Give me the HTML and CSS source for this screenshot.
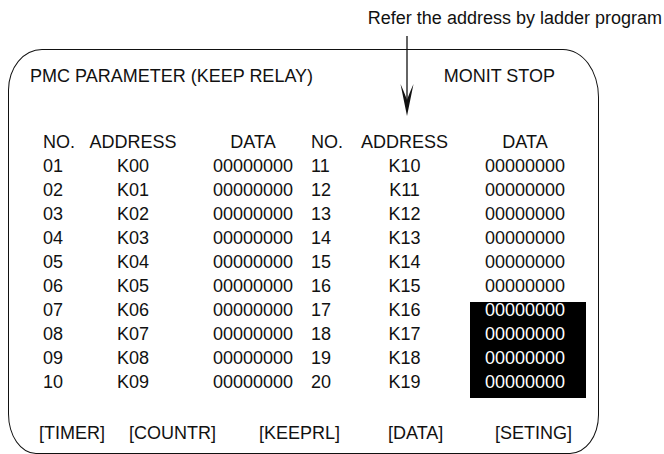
FILE: index.html
```html
<!DOCTYPE html>
<html lang="en">
<head>
  <meta charset="UTF-8" />
  <title>PMC Parameter (Keep Relay)</title>
  <link rel="stylesheet" href="styles.css">
</head>
<body>
  <div class="note">Refer the address by ladder program</div>

  <!-- pointer arrow runs over the top edge of the screen -->
  <svg class="pointer" width="20" height="82" viewBox="0 0 20 82">
    <line x1="10" y1="0" x2="10" y2="66" stroke="#111" stroke-width="1.3"/>
    <path d="M3.5 48 Q8 58 10 64 Q12 58 16.5 48 L10 80 Z" fill="#111"/>
  </svg>

  <div class="screen">
    <div class="screen-head">
      <span>PMC PARAMETER (KEEP RELAY)</span>
      <span class="status">MONIT STOP</span>
    </div>

    <div class="grid">
      <div class="no">NO.</div><div class="addr">ADDRESS</div><div class="data">DATA</div>
      <div class="no">NO.</div><div class="addr">ADDRESS</div><div class="data right">DATA</div>

      <div class="no">01</div><div class="addr">K00</div><div class="data">00000000</div>
      <div class="no">11</div><div class="addr">K10</div><div class="data right">00000000</div>

      <div class="no">02</div><div class="addr">K01</div><div class="data">00000000</div>
      <div class="no">12</div><div class="addr">K11</div><div class="data right">00000000</div>

      <div class="no">03</div><div class="addr">K02</div><div class="data">00000000</div>
      <div class="no">13</div><div class="addr">K12</div><div class="data right">00000000</div>

      <div class="no">04</div><div class="addr">K03</div><div class="data">00000000</div>
      <div class="no">14</div><div class="addr">K13</div><div class="data right">00000000</div>

      <div class="no">05</div><div class="addr">K04</div><div class="data">00000000</div>
      <div class="no">15</div><div class="addr">K14</div><div class="data right">00000000</div>

      <div class="no">06</div><div class="addr">K05</div><div class="data">00000000</div>
      <div class="no">16</div><div class="addr">K15</div><div class="data right">00000000</div>

      <div class="no">07</div><div class="addr">K06</div><div class="data">00000000</div>
      <div class="no">17</div><div class="addr">K16</div><div class="data right selected">00000000</div>

      <div class="no">08</div><div class="addr">K07</div><div class="data">00000000</div>
      <div class="no">18</div><div class="addr">K17</div><div class="data right selected">00000000</div>

      <div class="no">09</div><div class="addr">K08</div><div class="data">00000000</div>
      <div class="no">19</div><div class="addr">K18</div><div class="data right selected">00000000</div>

      <div class="no">10</div><div class="addr">K09</div><div class="data">00000000</div>
      <div class="no">20</div><div class="addr">K19</div><div class="data right selected">00000000</div>
    </div>

    <div class="softkeys">
      <span>[TIMER]</span>
      <span>[COUNTR]</span>
      <span>[KEEPRL]</span>
      <span>[DATA]</span>
      <span>[SETING]</span>
    </div>
  </div>
</body>
</html>
```

FILE: styles.css
```css
* {
  box-sizing: border-box;
}

body {
  margin: 0;
  padding-top: 8px;
  width: 664px;
  height: 454px;
  overflow: hidden;
  position: relative;
  background: #fff;
  color: #111;
  font-family: "Liberation Sans", Arial, sans-serif;
}

.note {
  font-size: 18px;
  line-height: 20px;
  text-align: right;
  padding-right: 2px;
}

.pointer {
  position: absolute;
  left: 397px;
  top: 36px;
}

.screen {
  margin: 21px 0 0 8px;
  width: 591px;
  height: 405px;
  border: 1.5px solid #111;
  border-radius: 34px 36px 29px 28px / 41px 48px 39px 40px;
  padding-top: 14px;
  font-size: 18px;
  line-height: 24px;
}

.screen-head {
  display: flex;
  justify-content: space-between;
  padding: 0 43px 0 21px;
}

.grid {
  display: grid;
  grid-template-columns: 46px 88px 134px 49px 89px 137px;
  margin-top: 42px;
  padding-left: 34px;
}

.addr {
  text-align: center;
}

.data {
  margin-left: 18px;
  text-align: center;
}

.data.right {
  margin-left: 21px;
  padding-right: 6px;
}

/* highlighted block sits a little lower than the text rows */
.selected {
  margin-top: 4px;
  margin-bottom: -4px;
  line-height: 16px;
  padding-bottom: 8px;
  background: #000;
  color: #fff;
}

.softkeys {
  display: grid;
  grid-template-columns: 90px 130px 129px 107px auto;
  margin-top: 27px;
  padding-left: 30px;
}
```
